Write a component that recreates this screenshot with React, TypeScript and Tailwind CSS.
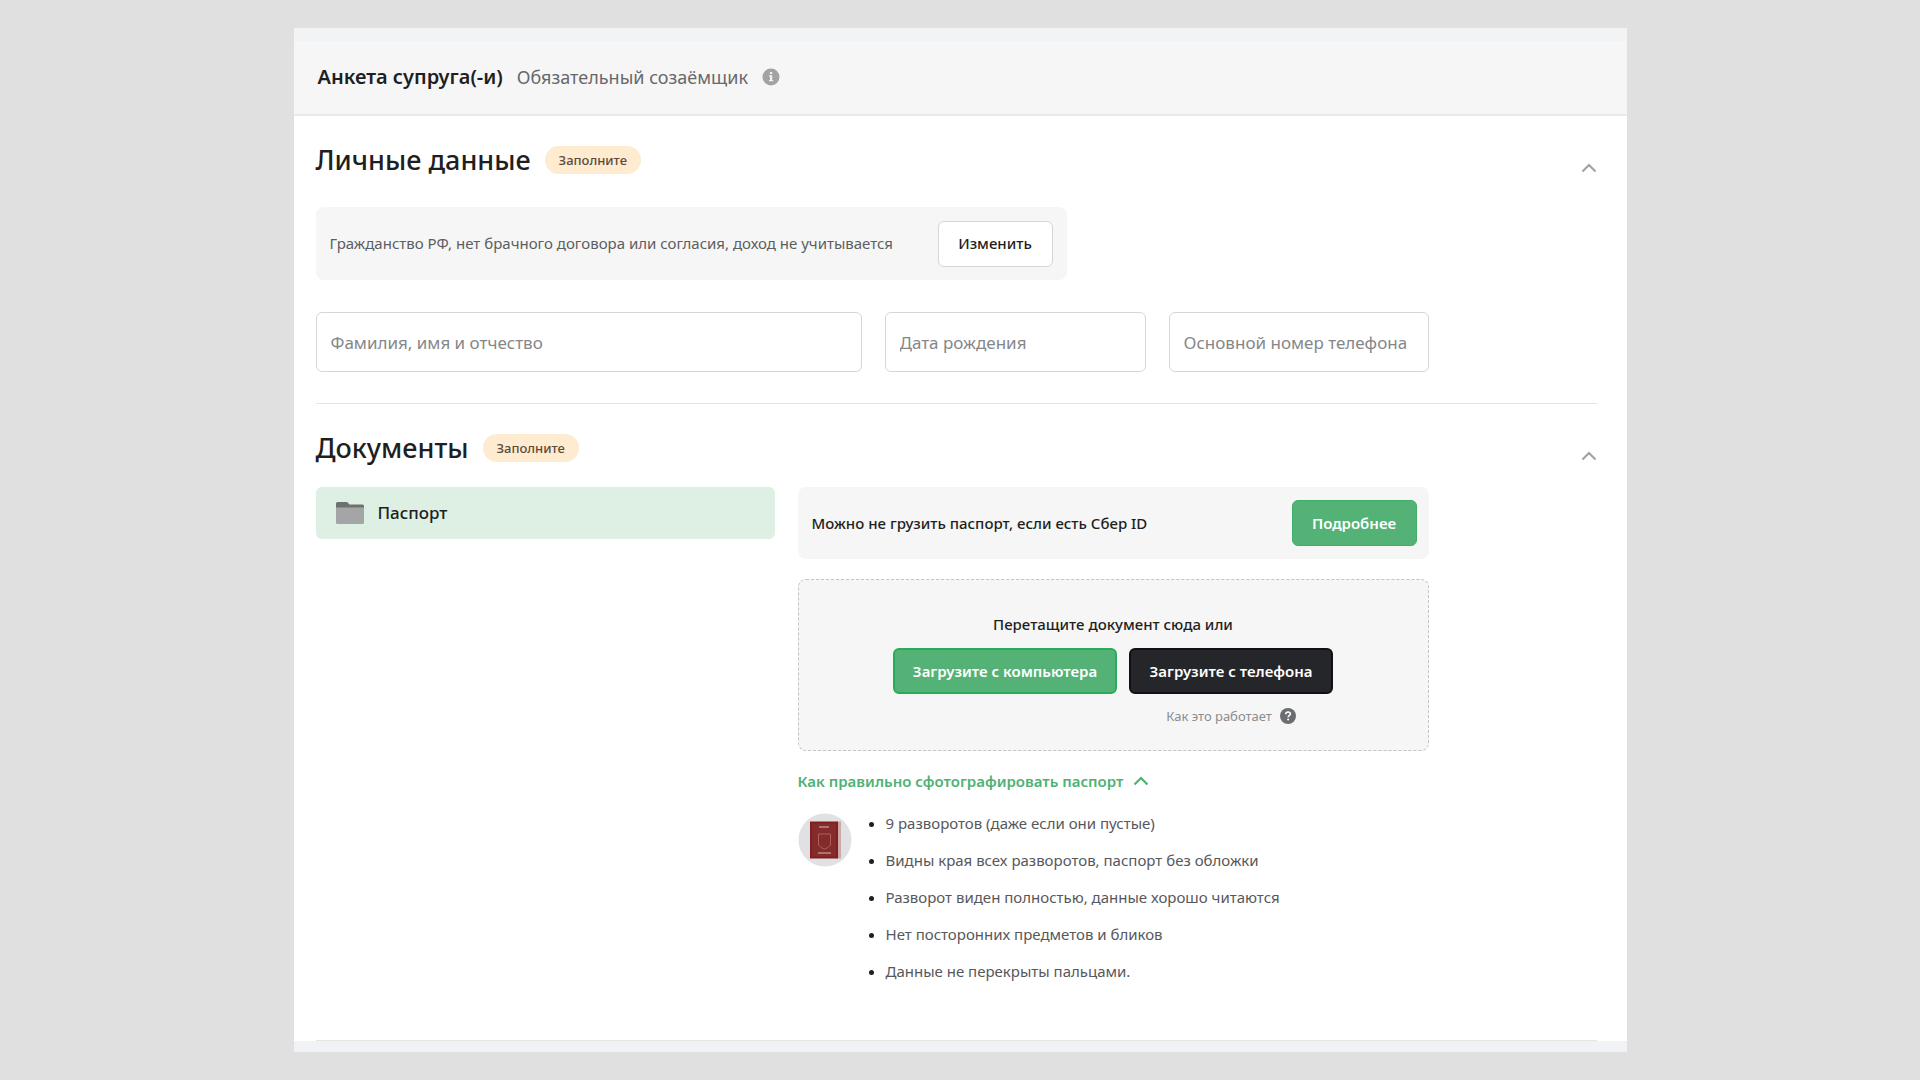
import { useState, type ReactNode } from "react";

const PHOTO_TIPS = [
  "9 разворотов (даже если они пустые)",
  "Видны края всех разворотов, паспорт без обложки",
  "Разворот виден полностью, данные хорошо читаются",
  "Нет посторонних предметов и бликов",
  "Данные не перекрыты пальцами.",
];

function Chevron({ open, className }: { open: boolean; className: string }) {
  return (
    <svg viewBox="0 0 16 10" fill="none" stroke="currentColor" className={`${className} ${open ? "" : "rotate-180"}`}>
      <path d="M1.5 8.5 8 2l6.5 6.5" strokeWidth="2.2" />
    </svg>
  );
}

function InfoIcon() {
  return (
    <svg viewBox="0 0 18 18" className="size-[18px]">
      <circle cx="9" cy="9" r="8.5" fill="#a3a3a3" />
      <path d="M8 4h2.2v2H8zM7 7.3h3.2v4.6h1v1.4H7v-1.4h1V8.6H7z" fill="#f2f2f2" />
    </svg>
  );
}

function QuestionIcon() {
  return (
    <svg viewBox="0 0 16 16" className="size-4">
      <circle cx="8" cy="8" r="8" fill="#6b6d70" />
      <path d="M5.7 6.2c0-1.4 1-2.2 2.3-2.2s2.3.8 2.3 2c0 1.5-2.2 1.6-2.2 3.3" fill="none" stroke="#fff" strokeWidth="1.6" />
      <circle cx="8.1" cy="11.6" r="1" fill="#fff" />
    </svg>
  );
}

function FolderIcon() {
  return (
    <svg viewBox="0 0 28 22" className="h-[22px] w-7">
      <path d="M0 1.5Q0 0 1.5 0H10.5q1 0 1.6.8L13.2 2.5H26.5Q28 2.5 28 4V8H0z" fill="#6f7170" />
      <path d="M0 5.5H28V20.5Q28 22 26.5 22H1.5Q0 22 0 20.5z" fill="#a4a5a7" />
    </svg>
  );
}

function PassportIcon() {
  return (
    <svg viewBox="0 0 54 54" className="size-[54px] shrink-0">
      <circle cx="27" cy="27" r="26.5" fill="#dfe1e2" />
      <path d="M38 8.5h5v37h-5z" fill="#c9aaa5" />
      <path d="M12 8.5h28v37H12z" fill="#861d1f" />
      <path d="M14 10.5h24v33H14z" fill="#842b2d" />
      <path d="M21 14h10M20 40h13" stroke="#b0716b" strokeWidth="2" />
      <path d="M20.5 21h12v11l-2.5 2.5-3.5 1.5-3.5-1.5-2.5-2.5z" fill="none" stroke="#b0605a" />
    </svg>
  );
}

function Section({ title, children }: { title: string; children: ReactNode }) {
  const [open, setOpen] = useState(true);

  return (
    <section className="border-b border-[#e4e6e6] pt-6">
      <div className="flex items-center justify-between">
        <div className="flex items-center gap-3.5">
          <h2 className="text-[27px] leading-10 font-medium">{title}</h2>
          <span className="rounded-full bg-[#feebd0] px-3.5 text-[13px] leading-7 font-medium text-[#5c4a3a]">
            Заполните
          </span>
        </div>
        <button type="button" aria-label={title} onClick={() => setOpen(!open)} className="pt-4 text-[#a3a3a3]">
          <Chevron open={open} className="h-2.5 w-4" />
        </button>
      </div>
      {open && children}
    </section>
  );
}

function Field({ name }: { name: string }) {
  return (
    <input
      aria-label={name}
      placeholder={name}
      className="h-[60px] w-full min-w-0 rounded-md border border-[#d4d7d7] px-3.5 text-[17px] placeholder:text-[#858789]"
    />
  );
}

export default function App() {
  const [tipsOpen, setTipsOpen] = useState(true);

  return (
    <div className="min-h-screen bg-[#e0e0e0] py-7 font-['Noto_Sans','Open_Sans',sans-serif] text-[#1f1f22]">
      <main className="mx-auto w-full max-w-[1333px] bg-white">
        <header className="border-t-[13px] border-b-2 border-t-[#f2f3f5] border-b-[#e8eaea] bg-[#f6f6f6] px-6 pt-[22px] pb-[23px]">
          <div className="flex h-7 items-center gap-3.5">
            <h1 className="text-xl font-semibold">Анкета супруга(-и)</h1>
            <span className="text-lg text-[#66686b]">Обязательный созаёмщик</span>
            <InfoIcon />
          </div>
        </header>

        <div className="pr-[30px] pl-[22px]">
          <Section title="Личные данные">
            <div className="mt-[27px] flex h-[73px] max-w-[751px] items-center justify-between rounded-lg bg-[#f6f6f6] px-3.5">
              <p className="text-[15px] text-[#5c5e61]">
                Гражданство РФ, нет брачного договора или согласия, доход не учитывается
              </p>
              <button type="button" className="h-[46px] w-[115px] rounded-md border border-[#d4d7d7] bg-white text-[15px] font-medium">
                Изменить
              </button>
            </div>
            <div className="mt-8 mb-[31px] grid max-w-[1113px] grid-cols-[546fr_261fr_260fr] gap-[23px]">
              <Field name="Фамилия, имя и отчество" />
              <Field name="Дата рождения" />
              <Field name="Основной номер телефона" />
            </div>
          </Section>

          <Section title="Документы">
            <div className="mt-[19px] grid max-w-[1113px] grid-cols-[459fr_631fr] items-start gap-[23px] pb-[50px]">
              <button type="button" className="flex h-[52px] items-center gap-3.5 rounded-md bg-[#deefe4] px-5 text-[17px] font-medium">
                <FolderIcon />
                Паспорт
              </button>

              <div>
                <div className="flex h-[72px] items-center justify-between rounded-lg bg-[#f6f6f6] pr-3 pl-3.5">
                  <p className="text-[15px] font-medium">Можно не грузить паспорт, если есть Сбер ID</p>
                  <button type="button" className="h-[46px] w-[125px] rounded-md border border-[#3fae68] bg-[#54b276] text-[15px] font-semibold text-white">
                    Подробнее
                  </button>
                </div>

                <div className="mt-5 flex h-[172px] flex-col items-center rounded-lg border border-dashed border-[#c0c5c5] bg-[#f6f6f6] pt-8">
                  <p className="text-[15px] leading-6 font-medium">Перетащите документ сюда или</p>
                  <div className="mt-3 flex gap-3">
                    <button type="button" className="h-[46px] w-[224px] rounded-md border-2 border-[#28ac5c] bg-[#54b276] text-[15px] font-semibold text-white">
                      Загрузите с компьютера
                    </button>
                    <div className="flex flex-col items-center gap-2.5">
                      <button type="button" className="h-[46px] w-[204px] rounded-md border-2 border-[#111114] bg-[#252629] text-[15px] font-semibold text-white">
                        Загрузите с телефона
                      </button>
                      <button type="button" className="flex items-center gap-2 text-[13px] leading-6 text-[#8a8c8e]">
                        Как это работает
                        <QuestionIcon />
                      </button>
                    </div>
                  </div>
                </div>

                <button
                  type="button"
                  onClick={() => setTipsOpen(!tipsOpen)}
                  className="mt-[18px] flex items-center gap-2.5 text-[15px] leading-6 font-semibold text-[#4fb174]"
                >
                  Как правильно сфотографировать паспорт
                  <Chevron open={tipsOpen} className="h-2.5 w-4" />
                </button>

                {tipsOpen && (
                  <div className="mt-3 flex items-start gap-[34px]">
                    <div className="pt-2">
                      <PassportIcon />
                    </div>
                    <ul className="list-disc text-[15px] leading-[37px] text-[#56585b] marker:text-[#1f1f22]">
                      {PHOTO_TIPS.map((tip) => (
                        <li key={tip}>{tip}</li>
                      ))}
                    </ul>
                  </div>
                )}
              </div>
            </div>
          </Section>
        </div>
        <div className="h-[11px] bg-[#f0f2f5]" />
      </main>
    </div>
  );
}
